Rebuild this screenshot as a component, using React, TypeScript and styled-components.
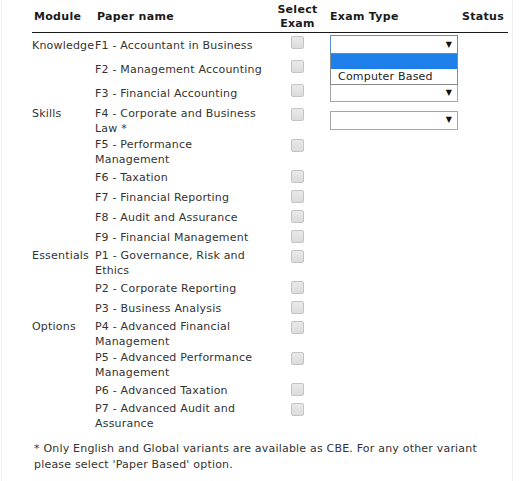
import styled, { createGlobalStyle } from "styled-components";

const GlobalStyle = createGlobalStyle`
  html, body {
    margin: 0;
    padding: 0;
    background: #ffffff;
  }
  body {
    font-family: "DejaVu Sans", Verdana, sans-serif;
    font-size: 11px;
    letter-spacing: 0.2px;
    color: #333333;
  }
`;

type Paper = {
  module?: string;
  name: string;
  exam?: boolean;
};

const papers: Paper[] = [
  { module: "Knowledge", name: "F1 - Accountant in Business", exam: true },
  { name: "F2 - Management Accounting", exam: true },
  { name: "F3 - Financial Accounting", exam: true },
  { module: "Skills", name: "F4 - Corporate and Business Law *", exam: true },
  { name: "F5 - Performance Management" },
  { name: "F6 - Taxation" },
  { name: "F7 - Financial Reporting" },
  { name: "F8 - Audit and Assurance" },
  { name: "F9 - Financial Management" },
  { module: "Essentials", name: "P1 - Governance, Risk and Ethics" },
  { name: "P2 - Corporate Reporting" },
  { name: "P3 - Business Analysis" },
  { module: "Options", name: "P4 - Advanced Financial Management" },
  { name: "P5 - Advanced Performance Management" },
  { name: "P6 - Advanced Taxation" },
  { name: "P7 - Advanced Audit and Assurance" },
];

const App = () => {
  return (
    <>
      <GlobalStyle />
      <Page>
        <Table>
          <HeaderRow>
            <HeadCell $pad>Module</HeadCell>
            <HeadCell $pad>Paper name</HeadCell>
            <HeadCell $center>
              Select
              <br />
              Exam
            </HeadCell>
            <HeadCell>Exam Type</HeadCell>
            <HeadCell>Status</HeadCell>
          </HeaderRow>
          {papers.map((p, i) => (
            <Row key={p.name}>
              <Label>
                <Module>{p.module}</Module>
                <PaperName>{p.name}</PaperName>
              </Label>
              <CheckCell>
                <Check />
              </CheckCell>
              <TypeCell>
                {p.exam && i !== 1 && (
                  <SelectBox $focused={i === 0}>
                    <Arrow>▼</Arrow>
                  </SelectBox>
                )}
                {i === 1 && <Spacer />}
                {i === 0 && (
                  <Dropdown>
                    <Option $active />
                    <Option>Computer Based</Option>
                  </Dropdown>
                )}
              </TypeCell>
              <StatusCell />
            </Row>
          ))}
        </Table>
        <Note>
          * Only English and Global variants are available as CBE. For any other variant
          please select 'Paper Based' option.
        </Note>
      </Page>
    </>
  );
};

export default App;

const Page = styled.div`
  margin-left: 1px;
  width: 512px;
  min-height: 481px;
  box-sizing: border-box;
  border-left: 1px solid #efefef;
  border-right: 1px solid #efefef;
  padding: 0 4px 0 30px;
`;

const Table = styled.div`
  display: flex;
  flex-direction: column;
`;

const HeaderRow = styled.div`
  display: grid;
  grid-template-columns: 63px 173px 62px 132px 48px;
  align-items: center;
  height: 31px;
  padding-top: 1px;
  border-bottom: 1px solid #1a1a1a;
`;

const HeadCell = styled.div<{ $center?: boolean; $pad?: boolean }>`
  font-weight: bold;
  font-size: 11px;
  letter-spacing: 0.3px;
  line-height: 14px;
  color: #1a1a1a;
  padding-left: ${(p) => (p.$pad ? "2px" : "0")};
  padding-right: ${(p) => (p.$center ? "3px" : "0")};
  text-align: ${(p) => (p.$center ? "center" : "left")};
`;

const Row = styled.div`
  display: grid;
  grid-template-columns: 236px 62px 132px 48px;
  min-height: 20px;
`;

const Label = styled.div`
  display: flex;
  align-items: flex-start;
  align-self: center;
  padding: 0.5px 0;
  line-height: 15px;
`;

const Module = styled.div`
  width: 63px;
  flex: none;
  white-space: nowrap;
`;

const PaperName = styled.div`
  width: 170px;
`;

const CheckCell = styled.div`
  display: flex;
  justify-content: center;
  align-items: flex-start;
  padding-top: 3px;
  padding-right: 3px;
`;

const Check = styled.span`
  display: block;
  width: 11px;
  height: 11px;
  border: 1px solid #c4c4c4;
  border-radius: 2px;
  background: linear-gradient(#e9e9e9, #dcdcdc);
`;

const TypeCell = styled.div`
  position: relative;
  align-self: center;
`;

const SelectBox = styled.div<{ $focused?: boolean }>`
  box-sizing: border-box;
  width: 128px;
  height: 19px;
  margin: 2px 0 3px;
  border: 1px solid ${(p) => (p.$focused ? "#5b8fd0" : "#a6a6a6")};
  background: #ffffff;
  display: flex;
  align-items: center;
  justify-content: flex-end;
  padding-right: 5px;
`;

const Spacer = styled.div`
  height: 24px;
`;

const Arrow = styled.span`
  font-size: 8px;
  color: #111111;
  line-height: 1;
`;

const Dropdown = styled.div`
  position: absolute;
  left: 0;
  top: 21px;
  width: 128px;
  box-sizing: border-box;
  border: 1px solid #8a8a8a;
  border-top: none;
  background: #ffffff;
  z-index: 2;
`;

const Option = styled.div<{ $active?: boolean }>`
  height: 15px;
  line-height: 15px;
  padding-left: 7px;
  color: #222222;
  background: ${(p) => (p.$active ? "#1e7fe8" : "#ffffff")};
`;

const StatusCell = styled.div``;

const Note = styled.p`
  margin: 10px 0 0 2px;
  line-height: 16px;
  width: 470px;
`;
